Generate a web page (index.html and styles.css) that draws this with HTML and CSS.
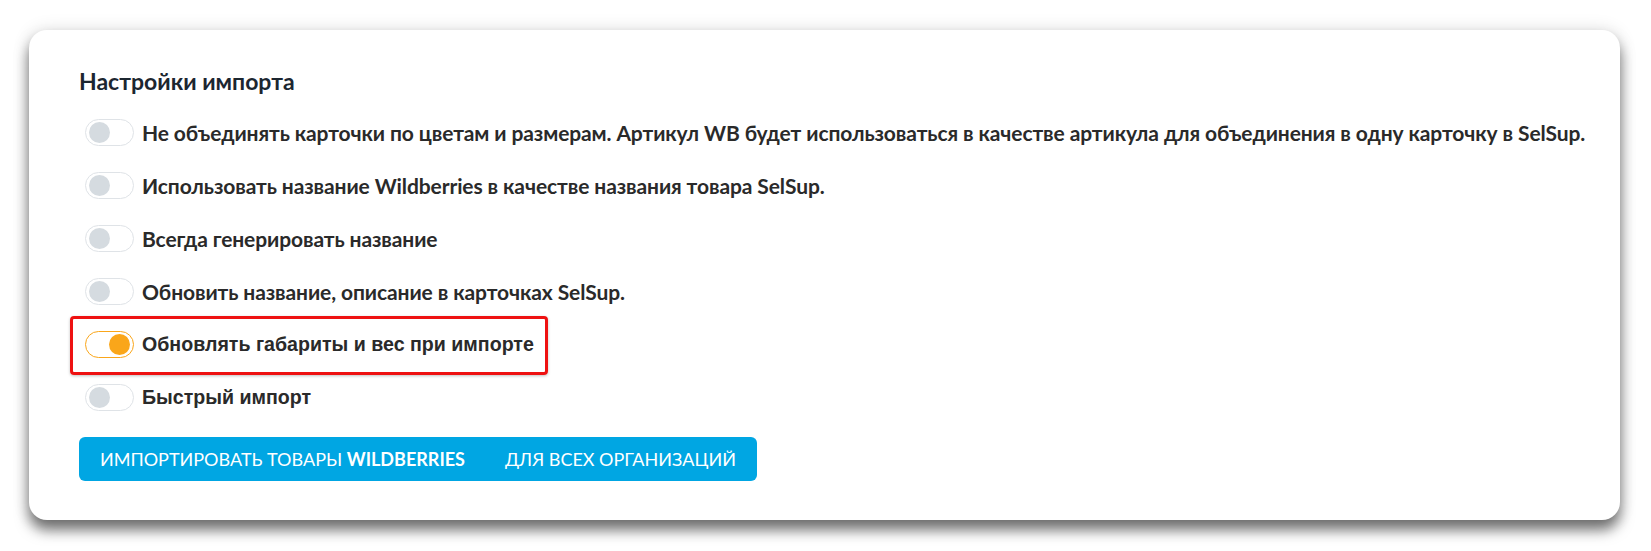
FILE: index.html
```html
<!doctype html>
<html>
<head>
    <meta charset="utf-8" />
    <title>Настройки импорта</title>
    <link rel="stylesheet" href="styles.css">
</head>

<body>
    <div id="card">
        <h2 class="title">Настройки импорта</h2>

        <div class="options">
            <label class="option">
                <input type="checkbox" />
                <span class="switch"></span>
                <span class="text">Не объединять карточки по цветам и размерам. Артикул WB будет использоваться в качестве артикула для объединения в одну карточку в SelSup.</span>
            </label>
            <label class="option">
                <input type="checkbox" />
                <span class="switch"></span>
                <span class="text">Использовать название Wildberries в качестве названия товара SelSup.</span>
            </label>
            <label class="option">
                <input type="checkbox" />
                <span class="switch"></span>
                <span class="text">Всегда генерировать название</span>
            </label>
            <label class="option">
                <input type="checkbox" />
                <span class="switch"></span>
                <span class="text">Обновить название, описание в карточках SelSup.</span>
            </label>
            <label class="option marked">
                <input type="checkbox" checked />
                <span class="switch"></span>
                <span class="text arial">Обновлять габариты и вес при импорте</span>
            </label>
            <label class="option">
                <input type="checkbox" />
                <span class="switch"></span>
                <span class="text arial">Быстрый импорт</span>
            </label>
        </div>

        <button class="import">
            <span>Импортировать товары <b>Wildberries</b></span>
            <span>для всех организаций</span>
        </button>
    </div>
</body>

</html>
```

FILE: styles.css
```css
:root {
    --text: #2a2a2a;
    --knob: #d5dbe0;
    --line: #dfe3e7;
    --accent: #faa61a;
    --blue: #00a6e3;
}
html, body {
    background-color: #fff;
}
body {
    margin: 0;
    padding: 30px 31px 31px 29px;
    font-family: 'Lato', sans-serif;
    color: var(--text);
}

#card {
    height: 490px;
    box-sizing: border-box;
    padding: 37px 50px 40px;
    border-radius: 18px;
    background: #fff;
    box-shadow: 0 10px 14px rgba(0, 0, 0, 0.55), 0 0 18px rgba(0, 0, 0, 0.12);
}
.title {
    margin: 0;
    font-size: 23px;
    font-weight: 700;
    line-height: 28px;
    color: #1c2630;
}

.options {
    display: flex;
    flex-direction: column;
    gap: 26px;
    margin: 24px 0 0 6px;
}
    .option {
        position: relative;
        display: flex;
        align-items: center;
        width: fit-content;
        height: 27px;
        cursor: pointer;
    }
        .option input {
            display: none;
        }
        .switch {
            position: relative;
            flex: none;
            width: 47px;
            height: 25px;
            margin-right: 8px;
            border: 1px solid var(--line);
            border-radius: 14px;
            background: #fff;
        }
        .switch::after {
            content: '';
            position: absolute;
            top: 2px;
            left: 3px;
            width: 21px;
            height: 21px;
            border-radius: 50%;
            background: var(--knob);
        }
        :checked + .switch {
            border-color: var(--accent);
        }
        :checked + .switch::after {
            left: 23px;
            background: var(--accent);
        }
        .text {
            font-size: 21px;
            font-weight: 700;
            white-space: nowrap;
            letter-spacing: -0.1px;
        }
        .text.arial {
            font-family: 'Liberation Sans', Arial, sans-serif;
            font-size: 19.6px;
            letter-spacing: 0;
        }
    /* red frame round the highlighted option */
    .option.marked::before {
        content: '';
        position: absolute;
        inset: -15px -14px -17px -15px;
        border: 3px solid #ee1111;
        border-radius: 4px;
        box-shadow: 0 1px 3px rgba(0, 0, 0, 0.25);
        pointer-events: none;
    }

.import {
    display: flex;
    gap: 40px;
    margin-top: 26px;
    height: 44px;
    padding: 0 21px;
    align-items: center;
    border: 0;
    border-radius: 6px;
    background: var(--blue);
    color: #fff;
    font-family: 'Lato', sans-serif;
    font-size: 18px;
    text-transform: uppercase;
}
```
